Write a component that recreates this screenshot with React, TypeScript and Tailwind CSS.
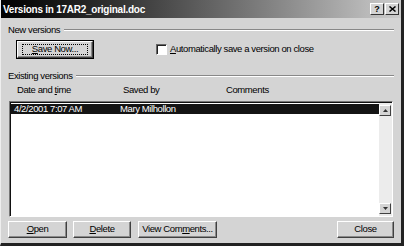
import React from 'react';

const font = { fontFamily: '"Liberation Sans", Arial, sans-serif' };

// classic 3D raised button
function Btn({ children, width, focus = false }: { children: React.ReactNode; width: string; focus?: boolean }) {
  return (
    <div className={`${width} h-[17px] shrink-0 border-t border-l border-t-white border-l-white border-r border-b border-r-[#404040] border-b-[#404040] bg-[#d4d4d4] shadow-[inset_-1px_-1px_0_#8a8a8a] flex items-center justify-center text-[9.5px] tracking-[-0.4px] text-black whitespace-nowrap ${focus ? 'outline outline-1 outline-black' : ''}`}>
      {focus ? (
        <span className="border border-dotted border-black w-[calc(100%-8px)] h-[11px] flex items-center justify-center">{children}</span>
      ) : (
        children
      )}
    </div>
  );
}

function GroupHeader({ label }: { label: string }) {
  return (
    <div className="h-[12px] flex items-center gap-[4px] pl-[7px] pr-[7px] text-[9.5px] tracking-[-0.4px] text-black whitespace-nowrap">
      <span>{label}</span>
      <div className="flex-1 border-t border-t-[#888] border-b border-b-white" />
    </div>
  );
}

function ScrollArrow({ up }: { up: boolean }) {
  return (
    <div className="w-[12px] h-[11px] bg-[#d4d4d4] border-t border-l border-t-white border-l-white border-r border-b border-r-[#404040] border-b-[#404040] flex items-center justify-center">
      <svg width="5" height="3" viewBox="0 0 5 3">
        {up ? <polygon points="2.5,0 5,3 0,3" fill="#333" /> : <polygon points="0,0 5,0 2.5,3" fill="#333" />}
      </svg>
    </div>
  );
}

export default function App() {
  return (
    <div style={font} className="w-[404px] h-[246px] bg-[#d4d4d4] border-r-[3px] border-b-[3px] border-r-[#222] border-b-[#222] border-l border-l-[#eee] flex flex-col overflow-hidden">
      {/* title bar */}
      <div className="h-[18px] shrink-0 bg-gradient-to-r from-[#030303] via-[#5e5e5e] to-[#cdcdcd] flex items-center justify-between pl-[2px] pr-[2px]">
        <span className="text-white font-bold text-[10px] tracking-[-0.25px] whitespace-nowrap">Versions in 17AR2_original.doc</span>
        <div className="flex gap-[1px]">
          <div className="w-[14px] h-[12px] bg-[#d4d4d4] border-t border-l border-t-white border-l-white border-r border-b border-r-[#333] border-b-[#333] flex items-center justify-center text-[9px] font-bold leading-none">?</div>
          <div className="w-[14px] h-[12px] bg-[#d4d4d4] border-t border-l border-t-white border-l-white border-r border-b border-r-[#333] border-b-[#333] flex items-center justify-center">
            <svg width="7" height="6" viewBox="0 0 7 6">
              <path d="M0.5 0.5 L6.5 5.5 M6.5 0.5 L0.5 5.5" stroke="#000" strokeWidth="1.5" />
            </svg>
          </div>
        </div>
      </div>

      <div className="mt-[6px] shrink-0">
        <GroupHeader label="New versions" />
      </div>
      <div className="flex items-center mt-[5px] h-[17px] shrink-0 pl-[16px]">
        <Btn width="w-[76px]" focus>
          <span><span className="underline">S</span>ave Now...</span>
        </Btn>
        <div className="ml-[63px] flex items-center gap-[3px] text-[9.5px] tracking-[-0.4px] whitespace-nowrap">
          <div className="w-[11px] h-[11px] bg-white border-t border-l border-t-[#666] border-l-[#666] border-r border-b border-r-white border-b-white shadow-[inset_1px_1px_0_#222]" />
          <span><span className="underline">A</span>utomatically save a version on close</span>
        </div>
      </div>

      <div className="mt-[12px] shrink-0">
        <GroupHeader label="Existing versions" />
      </div>
      <div className="flex text-[9.5px] tracking-[-0.4px] whitespace-nowrap pl-[16px] mt-[2px] h-[12px] shrink-0 items-center">
        <span className="w-[106px]">Date and <span className="underline">t</span>ime</span>
        <span className="w-[103px]">Saved by</span>
        <span>Comments</span>
      </div>

      {/* list box */}
      <div className="mx-[8px] mt-[5px] h-[116px] shrink-0 border-t border-l border-t-[#777] border-l-[#777] border-r border-b border-r-white border-b-white">
        <div className="h-full border-t border-l border-t-[#111] border-l-[#111] bg-white flex">
          <div className="flex-1 pt-[1px]">
            <div className="h-[10px] bg-[#141414] text-white text-[9.5px] tracking-[-0.4px] whitespace-nowrap flex items-center pl-[3px] leading-none">
              <span className="w-[106px]">4/2/2001 7:07 AM</span>
              <span>Mary Milhollon</span>
            </div>
          </div>
          <div className="w-[13px] flex flex-col justify-between py-[2px] pr-[1px] bg-[#ececec]">
            <ScrollArrow up />
            <ScrollArrow up={false} />
          </div>
        </div>
      </div>

      {/* bottom buttons */}
      <div className="flex items-center mt-[4px] h-[17px] shrink-0 pl-[7px] pr-[7px]">
        <Btn width="w-[59px]"><span><span className="underline">O</span>pen</span></Btn>
        <div className="w-[6px]" />
        <Btn width="w-[58px]"><span><span className="underline">D</span>elete</span></Btn>
        <div className="w-[7px]" />
        <Btn width="w-[79px]"><span>View Com<span className="underline">m</span>ents...</span></Btn>
        <div className="flex-1" />
        <Btn width="w-[57px]">Close</Btn>
      </div>
    </div>
  );
}
